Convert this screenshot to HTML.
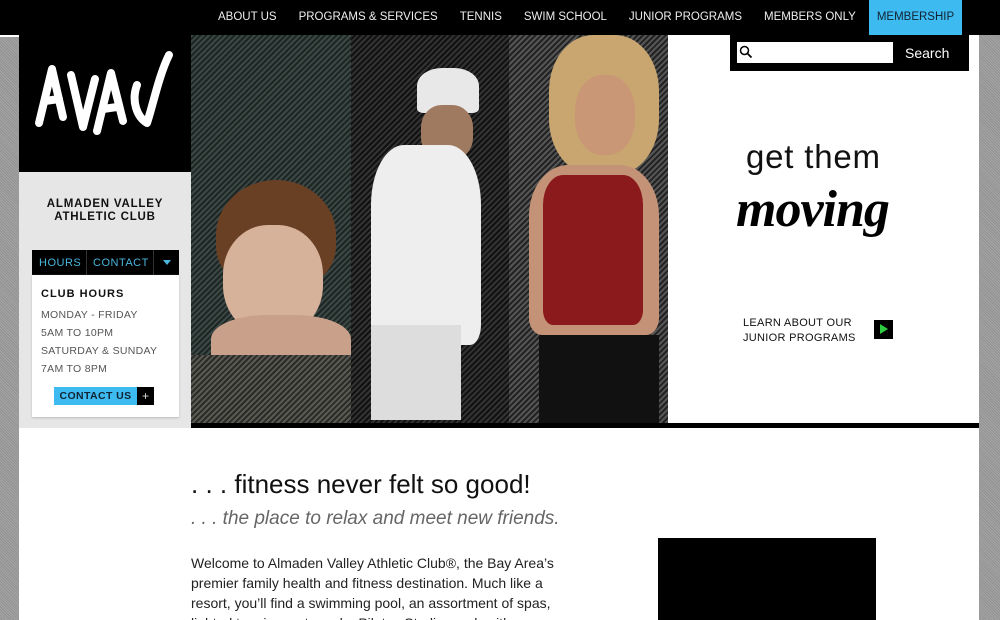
<!DOCTYPE html>
<html><head><meta charset="utf-8"><style>
*{margin:0;padding:0;box-sizing:border-box}
html,body{width:1000px;height:620px;overflow:hidden}
body{background:#9a9a9a repeating-linear-gradient(45deg,#a4a4a4 0 1px,#929292 1px 2px);font-family:"Liberation Sans",sans-serif;position:relative}
.abs{position:absolute}
#top{left:0;top:0;width:1000px;height:35px;background:#000}
#nav{left:207px;top:0;height:35px;display:flex;font-size:11.5px;color:#eee}
#nav div{padding:0 11px;line-height:35px}
#nav .m{background:#3dbbf0;color:#123;padding:0 8px;margin-left:2px}
#wrap{left:19px;top:35px;width:960px;height:585px;background:#fff}
.wl{left:0;top:35px;width:19px;height:2px;background:#fff}
#logo{left:19px;top:35px;width:172px;height:137px;background:#000}
#side{left:19px;top:172px;width:172px;height:256px;background:#e6e6e6}
.club{left:19px;top:198px;width:172px;text-align:center;font-weight:bold;font-size:11.5px;letter-spacing:.8px;line-height:13px;color:#111}
#tabs{left:32px;top:250px;width:147px;height:25px;background:#000;font-size:11px;color:#4ab6dc;letter-spacing:.5px}
#card{left:32px;top:275px;width:147px;height:142px;background:#fff;box-shadow:0 1px 2px #bbb}
.h{font-size:10.5px;color:#555;letter-spacing:.3px;left:41px}
#photo{left:191px;top:35px;width:477px;height:388px;background:#222}
.p{position:absolute;top:0;height:388px}
#bar{left:191px;top:423px;width:788px;height:5px;background:#000}
#search{left:730px;top:35px;width:239px;height:36px;background:#000}
</style></head><body>
<div class="abs" id="top"></div>
<div class="abs" id="nav"><div>ABOUT US</div><div>PROGRAMS &amp; SERVICES</div><div>TENNIS</div><div>SWIM SCHOOL</div><div>JUNIOR PROGRAMS</div><div>MEMBERS ONLY</div><div class="m">MEMBERSHIP</div></div>
<div class="abs wl"></div>
<div class="abs" id="wrap"></div>
<div class="abs" id="logo">
<svg width="172" height="137" viewBox="0 0 172 137"><g fill="none" stroke="#fff" stroke-width="8" stroke-linecap="round" stroke-linejoin="round"><path d="M20 88 L33 34 L44 82 M26 66 L40 64"/><path d="M52 40 L64 92 L76 44"/><path d="M78 96 L92 38 L104 86 M84 74 L98 72"/><path d="M150 20 C140 40 134 70 128 88 C118 82 112 66 118 50"/></g></svg>
</div>
<div class="abs" id="side"></div>
<div class="abs club">ALMADEN VALLEY<br>ATHLETIC CLUB</div>
<div class="abs" id="tabs">
<span class="abs" style="left:7px;top:7px">HOURS</span>
<span class="abs" style="left:54px;top:0;width:1px;height:25px;background:#333"></span>
<span class="abs" style="left:61px;top:7px">CONTACT</span>
<span class="abs" style="left:121px;top:0;width:1px;height:25px;background:#333"></span>
<span class="abs" style="left:131px;top:10px;width:0;height:0;border-left:4px solid transparent;border-right:4px solid transparent;border-top:5px solid #4ab6dc"></span>
</div>
<div class="abs" id="card"></div>
<div class="abs h" style="top:288px;font-weight:bold;color:#111;letter-spacing:1px;font-size:11px">CLUB HOURS</div>
<div class="abs h" style="top:309px">MONDAY - FRIDAY</div>
<div class="abs h" style="top:327px">5AM TO 10PM</div>
<div class="abs h" style="top:345px">SATURDAY &amp; SUNDAY</div>
<div class="abs h" style="top:363px">7AM TO 8PM</div>
<div class="abs" style="left:54px;top:387px;width:83px;height:18px;background:#3dbbf0;font-size:10.5px;font-weight:bold;color:#123;letter-spacing:.4px;text-align:center;line-height:18px">CONTACT US</div>
<div class="abs" style="left:137px;top:387px;width:17px;height:18px;background:#000;color:#ddd;font-size:12px;text-align:center;line-height:18px">+</div>
<div class="abs" id="photo">
<div class="p" style="left:0;width:160px;background:repeating-linear-gradient(135deg,#3c4846 0 2px,#1e2624 2px 4px)">
<div class="abs" style="left:25px;top:145px;width:120px;height:110px;border-radius:50% 50% 40% 40%;background:#6a4025"></div>
<div class="abs" style="left:32px;top:190px;width:100px;height:110px;border-radius:45%;background:#d7b29b"></div>
<div class="abs" style="left:20px;top:280px;width:140px;height:60px;border-radius:40% 40% 0 0;background:#c9a08a"></div>
<div class="abs" style="left:0;top:320px;width:160px;height:68px;background:repeating-linear-gradient(135deg,#5a5a52 0 2px,#2a2a28 2px 4px)"></div>
</div>
<div class="p" style="left:160px;width:158px;background:repeating-linear-gradient(135deg,#333 0 2px,#111 2px 4px)">
<div class="abs" style="left:66px;top:33px;width:62px;height:45px;border-radius:40% 40% 10% 10%;background:#e8e8e8"></div>
<div class="abs" style="left:70px;top:70px;width:52px;height:55px;border-radius:40%;background:#a07a60"></div>
<div class="abs" style="left:20px;top:110px;width:110px;height:200px;border-radius:30% 30% 10% 10%;background:#eee"></div>
<div class="abs" style="left:20px;top:290px;width:90px;height:95px;background:#ddd"></div>
</div>
<div class="p" style="left:318px;width:159px;background:repeating-linear-gradient(135deg,#555 0 2px,#222 2px 4px)">
<div class="abs" style="left:40px;top:0;width:110px;height:140px;border-radius:40%;background:#c9a670"></div>
<div class="abs" style="left:66px;top:40px;width:60px;height:80px;border-radius:45%;background:#c99676"></div>
<div class="abs" style="left:20px;top:130px;width:130px;height:170px;border-radius:30% 30% 10% 10%;background:#c49276"></div>
<div class="abs" style="left:34px;top:140px;width:100px;height:150px;border-radius:20% 20% 10% 10%;background:#8a1a1c"></div>
<div class="abs" style="left:30px;top:300px;width:120px;height:88px;background:#111"></div>
</div>
</div>
<div class="abs" id="bar"></div>
<div class="abs" id="search">
<div class="abs" style="left:7px;top:7px;width:156px;height:21px;background:#fff"></div>
<svg class="abs" style="left:9px;top:10px" width="14" height="14"><circle cx="5.5" cy="5.5" r="4" fill="none" stroke="#000" stroke-width="1.5"/><path d="M8.5 8.5 L12.5 12.5" stroke="#000" stroke-width="1.8"/></svg>
<div class="abs" style="left:175px;top:10px;color:#fff;font-size:14px">Search</div>
</div>
<div class="abs" style="left:746px;top:138px;font-size:33px;color:#111;letter-spacing:.8px">get them</div>
<div class="abs" style="left:736px;top:180px;font-size:52px;font-weight:bold;font-style:italic;color:#000;font-family:'Liberation Serif',serif;letter-spacing:-1px">moving</div>
<div class="abs" style="left:743px;top:316px;font-size:11px;line-height:15px;color:#111;letter-spacing:.3px">LEARN ABOUT OUR<br>JUNIOR PROGRAMS</div>
<div class="abs" style="left:874px;top:320px;width:19px;height:19px;background:#000"><div class="abs" style="left:6px;top:4px;border-top:5px solid transparent;border-bottom:5px solid transparent;border-left:8px solid #2ecc40"></div></div>
<div class="abs" style="left:191px;top:469px;font-size:26px;color:#111">. . . fitness never felt so good!</div>
<div class="abs" style="left:191px;top:508px;font-size:19px;color:#666;font-style:italic">. . . the place to relax and meet new friends.</div>
<div class="abs" style="left:191px;top:553px;font-size:14px;line-height:20px;color:#222;width:460px;white-space:nowrap">Welcome to Almaden Valley Athletic Club®, the Bay Area’s<br>premier family health and fitness destination. Much like a<br>resort, you’ll find a swimming pool, an assortment of spas,<br>lighted tennis courts and a Pilates Studio, each with</div>
<div class="abs" style="left:658px;top:538px;width:218px;height:82px;background:#000"></div>
</body></html>
